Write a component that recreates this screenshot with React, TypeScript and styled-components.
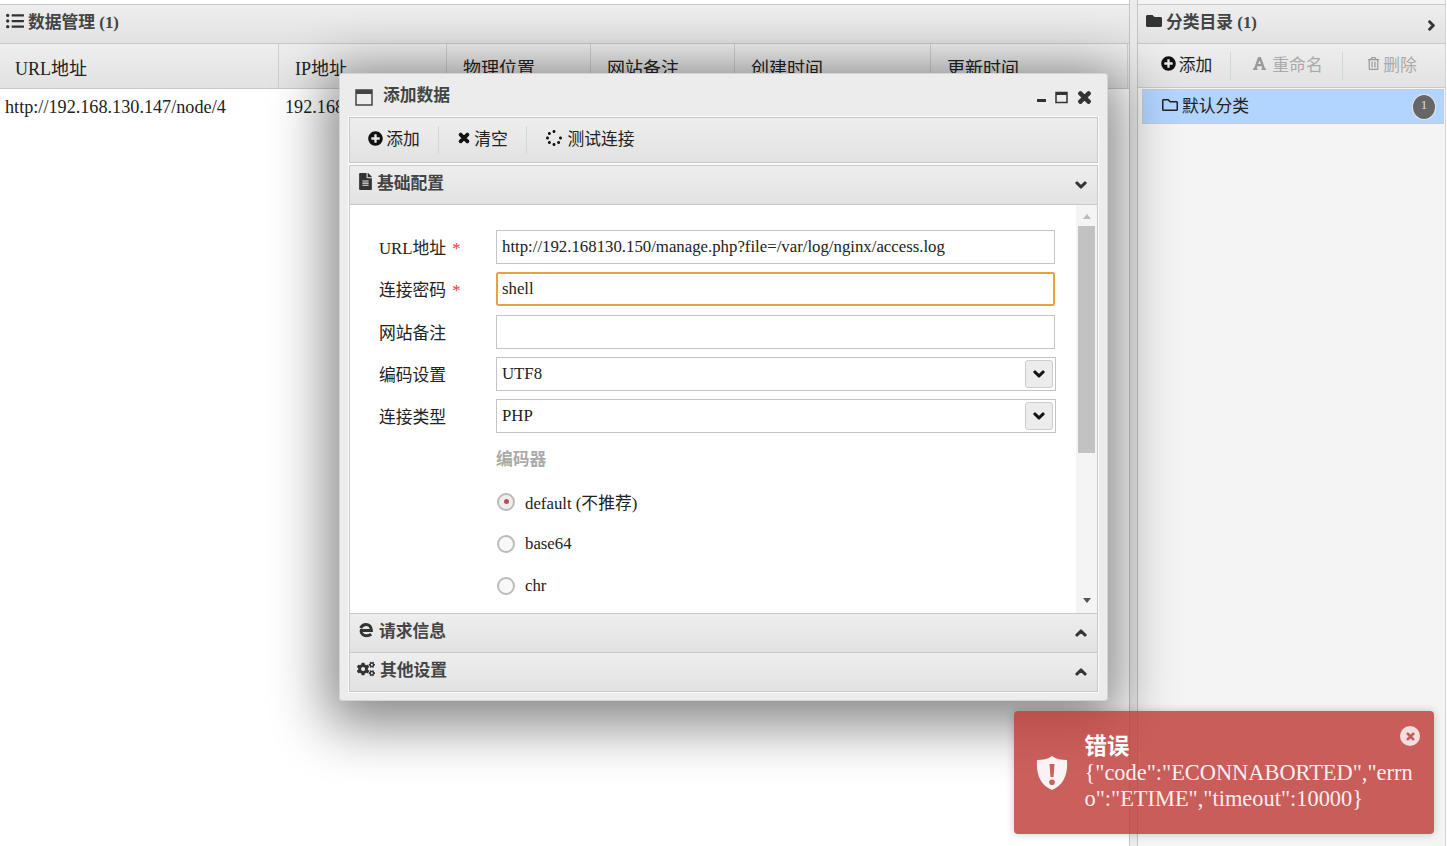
import React from 'react';
import styled, { createGlobalStyle } from 'styled-components';
import { FaListUl, FaFolder, FaRegFolder, FaPlusCircle, FaTimes, FaSpinner, FaFileAlt, FaChevronDown, FaChevronUp, FaChevronRight, FaCogs, FaFont, FaRegTrashAlt } from 'react-icons/fa';

const SERIF = `"Liberation Serif", "Noto Sans CJK SC", serif`;
const GRAD = `linear-gradient(to bottom, #eeeeee, #e2e2e2)`;

const Global = createGlobalStyle`
  html, body { margin: 0; padding: 0; height: 100%; overflow: hidden; background: #fff; }
  body { font-family: ${SERIF}; color: #222; }
  * { box-sizing: border-box; }
`;

const Page = styled.div`
  width: 1447px; height: 846px; position: relative; overflow: hidden;
  display: grid; grid-template-columns: 1130px 7px 309px 1px; background: #fff;
`;
const MainPanel = styled.section`
  display: flex; flex-direction: column; padding-top: 4px; border-right: 1px solid #c4c4c4; background: #fff; min-width: 0;
`;
const Divider = styled.div`background: #ebebeb;`;
const SidePanel = styled.aside`
  display: flex; flex-direction: column; padding-top: 4px; background: #f4f4f4; border-left: 1px solid #c4c4c4; border-right: 1px solid #d4d4d4;
`;
const PanelHeader = styled.header`
  height: 40px; flex: none; display: flex; align-items: center; gap: 4px; padding: 0 6px 7px 6px;
  background: ${GRAD}; border-top: 1px solid #c8c8c8; border-bottom: 1px solid #c8c8c8;
  font-size: 16.8px; font-weight: 700; color: #444;
  svg { color: #333; }
`;
const SideHeader = styled(PanelHeader)`
  padding-left: 8px; padding-right: 8px; justify-content: space-between;
`;
const HeaderTitle = styled.span`display: inline-flex; align-items: center; gap: 4px;`;
const HeavyChevron = styled(FaChevronRight)`stroke: currentColor; stroke-width: 50; margin-top: 9px;`;
const GridHead = styled.div`
  height: 45px; flex: none; display: flex; background: ${GRAD}; border-bottom: 1px solid #c8c8c8;
`;
const HeadCell = styled.div<{ $w: number; $pad?: number }>`
  width: ${p => p.$w}px; flex: none; border-right: 1px solid #cfcfcf;
  padding: 15px 0 0 ${p => p.$pad ?? 16}px; font-size: 18px; line-height: 20px; color: #222; white-space: nowrap;
`;
const GridRow = styled.div`
  display: flex; height: 36px; font-size: 18.2px; line-height: 36px; color: #222; white-space: nowrap;
`;
const RowCell = styled.div<{ $w: number; $pad: number }>`
  width: ${p => p.$w}px; padding-left: ${p => p.$pad}px; flex: none; overflow: hidden;
`;

const Toolbar = styled.div`
  height: 44px; display: flex; align-items: center; flex: none; background: ${GRAD};
  border-bottom: 1px solid #c8c8c8; padding-left: 5px;
`;
const ToolButton = styled.div<{ $off?: boolean; $w: number; $gap?: number; $inset?: number }>`
  width: ${p => p.$w}px; height: 28px; padding: 0 0 4px ${p => p.$inset ?? 0}px; display: inline-flex; align-items: center; justify-content: center; gap: ${p => p.$gap ?? 3}px;
  font-size: 16.8px; color: ${p => (p.$off ? '#aaa' : '#222')}; white-space: nowrap;
  font-family: ${SERIF};
  svg { color: ${p => (p.$off ? '#999' : '#111')}; }
  & + & { border-left: 1px solid #cbdadd; }
`;
const HeavyTimes = styled(FaTimes)`stroke: currentColor; stroke-width: 40;`;
const TreeRow = styled.div`
  margin: 1px 1px 0 4px; height: 35px; background: #b2d5ff; border: 1px solid #c4cbd6;
  display: flex; align-items: center; justify-content: space-between; padding: 0 7px 0 19px; font-size: 16.8px; color: #222;
`;
const TreeLabel = styled.span`display: inline-flex; align-items: center; gap: 4px; margin-bottom: 4px;`;
const Badge = styled.span`
  width: 24px; height: 26px; border-radius: 50%; background: #666; color: #ddd; border: 1px solid #e8e8e8;
  display: flex; align-items: center; justify-content: center; font-size: 13px; padding-bottom: 3px;
`;

const Dialog = styled.div`
  position: absolute; left: 339px; top: 73px; width: 769px; height: 628px;
  background: #ececec; border: 1px solid #d4d4d4; border-radius: 3px;
  box-shadow: 0 12px 55px 12px rgba(0,0,0,.48);
  display: flex; flex-direction: column; padding: 0 9px 8px 9px;
`;
const DialogTitle = styled.div`
  height: 43px; flex: none; display: flex; align-items: center; justify-content: space-between;
  padding: 0 5px 4px 6px; font-size: 16.8px; font-weight: 700; color: #444;
`;
const TitleLeft = styled.span`display: inline-flex; align-items: center; gap: 10px; svg { margin-top: 7px; }`;
const WinControls = styled.span`display: inline-flex; align-items: center; gap: 8px; color: #333; margin-top: 7px; margin-right: 0;`;
const DialogBody = styled.div`
  flex: 1; display: flex; flex-direction: column; min-height: 0; gap: 2px;
`;
const DialogToolbar = styled.div`
  height: 46px; flex: none; display: flex; align-items: center; background: ${GRAD};
  border: 1px solid #c8c8c8; box-shadow: 0 0 0 1px #fbfbfb;
`;
const Accordion = styled.div`
  flex: 1; min-height: 0; display: flex; flex-direction: column; border: 1px solid #c8c8c8; background: #fff; box-shadow: 0 0 0 1px #fbfbfb;
`;
const AccHead = styled.div<{ $first?: boolean }>`
  height: 39px; flex: none; background: ${GRAD}; display: flex; align-items: center; justify-content: space-between;
  padding: 0 10px 7px 7px; font-size: 16.8px; font-weight: 700; color: #444;
  ${p => (p.$first ? 'border-bottom: 1px solid #c8c8c8;' : 'border-top: 1px solid #c8c8c8;')}
  svg { color: #333; }
`;
const AccTitle = styled.span<{ $gap?: number }>`display: inline-flex; align-items: center; gap: ${p => p.$gap ?? 4}px;`;
const HeavyDown = styled(FaChevronDown)`stroke: currentColor; stroke-width: 50; margin-top: 7px;`;
const HeavyUp = styled(FaChevronUp)`stroke: currentColor; stroke-width: 50; margin-top: 7px;`;
const AccContent = styled.div`
  flex: 1; min-height: 0; display: flex; background: #fff;
`;
const FormArea = styled.div`
  flex: 1; padding: 25px 21px 0 29px; display: flex; flex-direction: column; overflow: hidden;
`;
const FormRow = styled.div`
  display: grid; grid-template-columns: 117px 1fr; align-items: center; height: 34px; margin-bottom: 8.25px; font-size: 16.8px;
`;
const Label = styled.label`color: #222; white-space: nowrap;`;
const Star = styled.span`color: #e33; margin-left: 6px;`;
const Input = styled.div<{ $active?: boolean; $select?: boolean }>`
  height: 34px; background: #fff; border: 1px solid ${p => (p.$active ? '#e6a33c' : '#c4c4c4')};
  ${p => (p.$active ? 'box-shadow: 0 0 0 1px #e6a33c inset; border-radius: 2px;' : '')}
  ${p => (p.$select ? 'margin-right: -1px;' : '')}
  padding: 0 5px; font-size: 16.8px; color: #222; display: flex; align-items: center; justify-content: space-between; white-space: nowrap;
`;
const SelectBtn = styled.span`
  width: 28px; height: 28px; margin-right: -3px; background: #ececec; border: 1px solid #ccc; border-radius: 3px;
  display: flex; align-items: center; justify-content: center; color: #111;
`;
const SelectChevron = styled(FaChevronDown)`stroke: currentColor; stroke-width: 50;`;
const FieldSet = styled.div`
  margin-left: 117px; display: flex; flex-direction: column;
`;
const FieldLegend = styled.div`
  font-size: 16.8px; font-weight: 700; color: #aaa; height: 39.5px; line-height: 38px;
`;
const RadioRow = styled.div`
  display: flex; align-items: center; gap: 10px; height: 42px; font-size: 16.8px; color: #222;
`;
const Radio = styled.span<{ $on?: boolean }>`
  width: 18px; height: 18px; margin-left: 1px; border-radius: 50%; border: 2px solid #bbb; background: ${p => (p.$on ? '#f2eded' : '#f8f8f8')};
  display: flex; align-items: center; justify-content: center; flex: none;
  &::after { content: ''; width: 5px; height: 5px; border-radius: 50%; background: ${p => (p.$on ? '#b0525a' : 'transparent')}; }
`;
const ScrollBar = styled.div`
  width: 21px; flex: none; background: #f4f4f4; display: flex; flex-direction: column; align-items: center;
`;
const Arrow = styled.span<{ $up?: boolean }>`
  width: 0; height: 0; flex: none; border-left: 4px solid transparent; border-right: 4px solid transparent;
  ${p => (p.$up ? 'border-bottom: 5px solid #bbb; margin-top: 9px;' : 'border-top: 5px solid #555; margin-top: 145px;')}
`;
const Thumb = styled.div`width: 17px; height: 227px; margin-top: 7px; background: #c2c2c2; flex: none;`;

const Toast = styled.div`
  position: absolute; left: 1014px; top: 711px; width: 420px; height: 123px; border-radius: 4px;
  background: rgba(190, 60, 56, .82); color: #fff; box-shadow: 0 0 8px rgba(0,0,0,.2);
  display: flex; align-items: flex-start; padding: 23px 20px 0 22px; gap: 16.5px;
`;
const ToastIcon = styled.span`margin-top: 21px; flex: none; line-height: 0;`;
const ToastText = styled.div`
  flex: 1; min-width: 0; font-size: 22.4px; line-height: 26px; color: #fdeeee; word-break: break-all;
`;
const ToastTitle = styled.div`font-size: 22.4px; font-weight: 700; line-height: 26px; color: #fff;`;
const ToastClose = styled.span`
  position: absolute; right: 14px; top: 15px; width: 20px; height: 20px; border-radius: 50%;
  background: #f3dfdf; color: #c25a56; display: flex; align-items: center; justify-content: center;
`;

const WinIcon = () => (
  <svg width="18" height="18" viewBox="0 0 18 18">
    <rect x="1" y="2" width="16" height="15" fill="none" stroke="#444" strokeWidth="1.5" />
    <rect x="1" y="2" width="16" height="4" fill="#444" />
  </svg>
);
const MinIcon = () => (
  <svg width="10" height="14" viewBox="0 0 10 14"><rect x="0" y="9" width="9" height="3" fill="#333" /></svg>
);
const MaxIcon = () => (
  <svg width="13" height="13" viewBox="0 0 13 13">
    <rect x="1" y="1.5" width="11" height="10" fill="none" stroke="#333" strokeWidth="1.5" />
    <rect x="1" y="1" width="11" height="3" fill="#333" />
  </svg>
);
const ShieldIcon = () => (
  <svg width="32" height="36" viewBox="0 0 32 36">
    <path fillRule="evenodd" fill="#fbf3f3" d="M16 1c4 3 9 4 15 4 1 14-3 25-15 30C4 30 0 19 1 5c6 0 11-1 15-4ZM13.5 9l1 13h3l1-13h-5Zm2.5 15.5a2.8 2.8 0 1 0 0 5.6 2.8 2.8 0 0 0 0-5.6Z" />
  </svg>
);
const EdgeIcon = () => (
  <svg width="16" height="16" viewBox="0 0 16 16" style={{ marginLeft: 1 }}>
    <path d="M2 8.4h11.4C13.4 4.6 11 2.4 8 2.4 5 2.4 3.6 4 2.6 6M3 8.4c0 3 2.2 5.3 5.4 5.3 2 0 3.4-.5 4.8-1.5" fill="none" stroke="#333" strokeWidth="3" />
  </svg>
);

export default function App() {
  return (
    <Page>
      <Global />
      <MainPanel>
        <PanelHeader><FaListUl size={18} /><span>数据管理 (1)</span></PanelHeader>
        <GridHead>
          <HeadCell $w={279} $pad={15}>URL地址</HeadCell>
          <HeadCell $w={168}>IP地址</HeadCell>
          <HeadCell $w={144}>物理位置</HeadCell>
          <HeadCell $w={144}>网站备注</HeadCell>
          <HeadCell $w={196}>创建时间</HeadCell>
          <HeadCell $w={197}>更新时间</HeadCell>
        </GridHead>
        <GridRow>
          <RowCell $w={279} $pad={5}>http://192.168.130.147/node/4</RowCell>
          <RowCell $w={168} $pad={6}>192.168.130.147</RowCell>
        </GridRow>
      </MainPanel>
      <Divider />
      <SidePanel>
        <SideHeader>
          <HeaderTitle><FaFolder size={16} /><span>分类目录 (1)</span></HeaderTitle>
          <HeavyChevron size={11} />
        </SideHeader>
        <Toolbar>
          <ToolButton $w={87}><FaPlusCircle size={15} />添加</ToolButton>
          <ToolButton $w={112} $off $gap={5} $inset={2}><FaFont size={15} />重命名</ToolButton>
          <ToolButton $w={95} $off $inset={4}><FaRegTrashAlt size={13} />删除</ToolButton>
        </Toolbar>
        <TreeRow>
          <TreeLabel><FaRegFolder size={16} />默认分类</TreeLabel>
          <Badge>1</Badge>
        </TreeRow>
      </SidePanel>

      <Dialog>
        <DialogTitle>
          <TitleLeft><WinIcon />添加数据</TitleLeft>
          <WinControls><MinIcon /><MaxIcon /><HeavyTimes size={17} /></WinControls>
        </DialogTitle>
        <DialogBody>
          <DialogToolbar>
            <ToolButton $w={88}><FaPlusCircle size={15} />添加</ToolButton>
            <ToolButton $w={88}><HeavyTimes size={14} />清空</ToolButton>
            <ToolButton $w={128} $gap={5}><FaSpinner size={16} />测试连接</ToolButton>
          </DialogToolbar>
          <Accordion>
            <AccHead $first>
              <AccTitle $gap={3}><FaFileAlt size={17} />基础配置</AccTitle>
              <HeavyDown size={12} />
            </AccHead>
            <AccContent>
              <FormArea>
                <FormRow><Label>URL地址<Star>*</Star></Label><Input>http://192.168130.150/manage.php?file=/var/log/nginx/access.log</Input></FormRow>
                <FormRow><Label>连接密码<Star>*</Star></Label><Input $active>shell</Input></FormRow>
                <FormRow><Label>网站备注</Label><Input /></FormRow>
                <FormRow><Label>编码设置</Label><Input $select>UTF8<SelectBtn><SelectChevron size={12} /></SelectBtn></Input></FormRow>
                <FormRow><Label>连接类型</Label><Input $select>PHP<SelectBtn><SelectChevron size={12} /></SelectBtn></Input></FormRow>
                <FieldSet>
                  <FieldLegend>编码器</FieldLegend>
                  <RadioRow><Radio $on />default (不推荐)</RadioRow>
                  <RadioRow><Radio />base64</RadioRow>
                  <RadioRow><Radio />chr</RadioRow>
                </FieldSet>
              </FormArea>
              <ScrollBar>
                <Arrow $up />
                <Thumb />
                <Arrow />
              </ScrollBar>
            </AccContent>
            <AccHead>
              <AccTitle $gap={5}><EdgeIcon />请求信息</AccTitle>
              <HeavyUp size={12} />
            </AccHead>
            <AccHead>
              <AccTitle $gap={5}><FaCogs size={18} />其他设置</AccTitle>
              <HeavyUp size={12} />
            </AccHead>
          </Accordion>
        </DialogBody>
      </Dialog>

      <Toast>
        <ToastIcon><ShieldIcon /></ToastIcon>
        <ToastText>
          <ToastTitle>错误</ToastTitle>
          {'{"code":"ECONNABORTED","errno":"ETIME","timeout":10000}'}
        </ToastText>
        <ToastClose><HeavyTimes size={11} /></ToastClose>
      </Toast>
    </Page>
  );
}
